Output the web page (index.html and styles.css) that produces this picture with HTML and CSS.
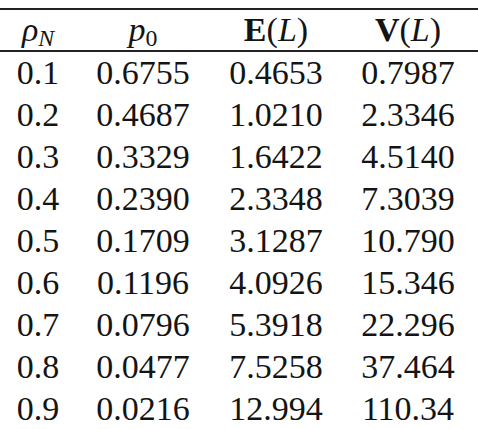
FILE: index.html
```html
<!DOCTYPE html>
<html lang="en">
<head>
    <meta charset="UTF-8">
    <meta name="viewport" content="width=device-width, initial-scale=1.0">
    <title>Queue Length Table</title>
    <link rel="stylesheet" href="styles.css">
</head>
<body>
    <table class="results">
        <colgroup>
            <col class="col-rho">
            <col class="col-p0">
            <col class="col-mean">
            <col class="col-var">
        </colgroup>
        <thead>
            <tr>
                <th><i>ρ</i><sub><i>N</i></sub></th>
                <th><i>p</i><sub>0</sub></th>
                <th><b>E</b>(<i>L</i>)</th>
                <th class="last"><b>V</b>(<i>L</i>)</th>
            </tr>
        </thead>
        <tbody>
<tr><td>0.1</td> <td>0.6755</td> <td>0.4653</td> <td class="last">0.7987</td></tr>
<tr><td>0.2</td> <td>0.4687</td> <td>1.0210</td> <td class="last">2.3346</td></tr>
<tr><td>0.3</td> <td>0.3329</td> <td>1.6422</td> <td class="last">4.5140</td></tr>
<tr><td>0.4</td> <td>0.2390</td> <td>2.3348</td> <td class="last">7.3039</td></tr>
<tr><td>0.5</td> <td>0.1709</td> <td>3.1287</td> <td class="last">10.790</td></tr>
<tr><td>0.6</td> <td>0.1196</td> <td>4.0926</td> <td class="last">15.346</td></tr>
<tr><td>0.7</td> <td>0.0796</td> <td>5.3918</td> <td class="last">22.296</td></tr>
<tr><td>0.8</td> <td>0.0477</td> <td>7.5258</td> <td class="last">37.464</td></tr>
<tr><td>0.9</td> <td>0.0216</td> <td>12.994</td> <td class="last">110.34</td></tr>
        </tbody>
    </table>
</body>
</html>
```

FILE: styles.css
```css
body {
    font-family: "Liberation Serif", "DejaVu Serif", serif;
    margin: 0;
    padding: 0;
    background: #fff;
    color: #141414;
    overflow: hidden;
}
.results {
    width: 478px;
    margin-top: 8px;
    border-collapse: collapse;
    table-layout: fixed;
    border-top: 2px solid #222;
    font-size: 34px;
}
.col-rho {
    width: 76px;
}
.col-p0 {
    width: 134px;
}
.col-mean {
    width: 132px;
}
.col-var {
    width: 136px;
}
th, td {
    padding: 0;
    text-align: center;
    white-space: nowrap;
}
th {
    font-weight: normal;
    height: 40px;
    line-height: 40px;
    border-bottom: 2px solid #222;
}
th b {
    font-weight: bold;
}
td {
    height: 42px;
    line-height: 42px;
}
.last {
    padding-right: 4px;
}
sub {
    font-size: 0.7em;
    line-height: 0;
    vertical-align: -0.2em;
}
```
